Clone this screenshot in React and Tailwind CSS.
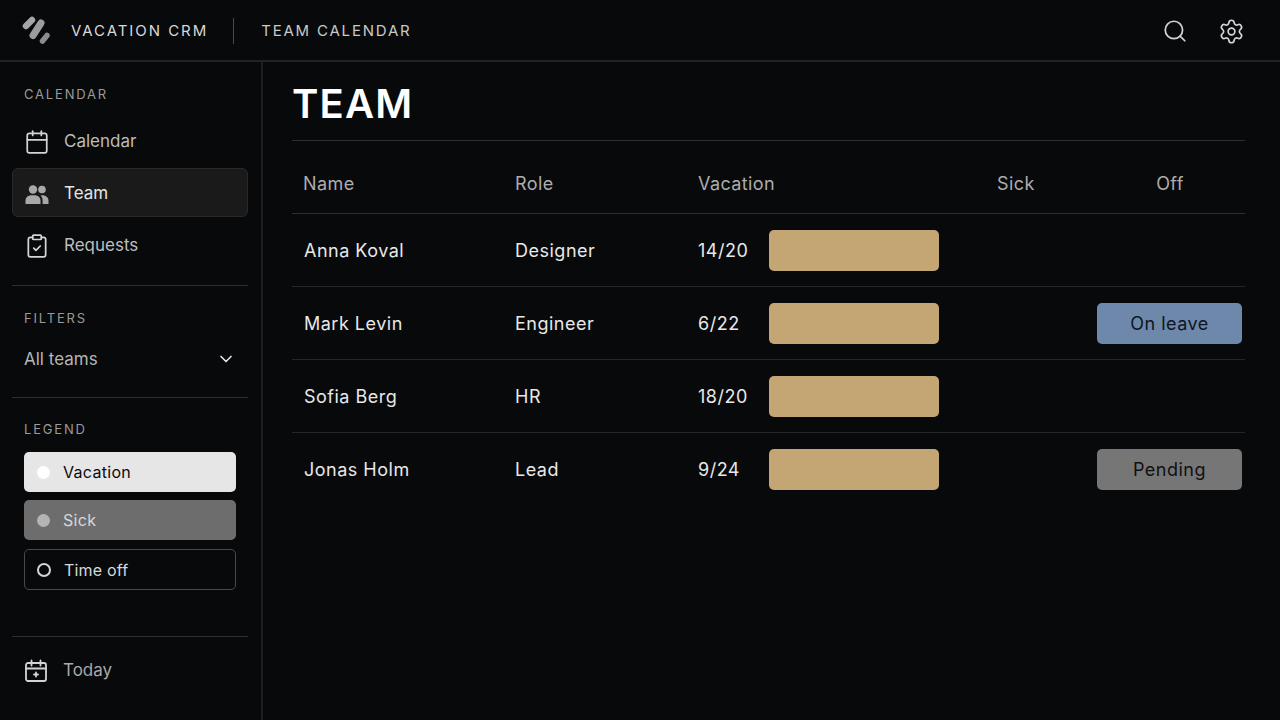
import { Calendar, ClipboardCheck, ChevronDown, Search, Settings } from 'lucide-react'

const ROWS = [
  { name: 'Anna Koval', role: 'Designer', days: '14/20' },
  { name: 'Mark Levin', role: 'Engineer', days: '6/22', off: 'On leave' },
  { name: 'Sofia Berg', role: 'HR', days: '18/20' },
  { name: 'Jonas Holm', role: 'Lead', days: '9/24', off: 'Pending' },
]

const COLS = 'grid grid-cols-[223px_183px_299px_100px_148px]'

function Logo() {
  return (
    <svg width="32" height="32" viewBox="0 0 32 32" fill="none" strokeLinecap="round">
      <path d="M12 5 6 11" stroke="#a6a6a6" strokeWidth="6.5" />
      <path d="M21 8 13 20.5" stroke="#9c9c9c" strokeWidth="7" />
      <path d="M27 20.5 22.5 26" stroke="#8c8c8c" strokeWidth="5.5" />
    </svg>
  )
}

function TeamIcon() {
  return (
    <svg width="26" height="26" viewBox="0 0 26 26" fill="#a8a8a8">
      <circle cx="9" cy="8.5" r="4.2" />
      <circle cx="18" cy="8.5" r="3.8" />
      <path d="M1.5 23v-3.5c0-3.2 2.6-5.3 6-5.3h3c3.4 0 6 2.1 6 5.3V23z" />
      <path d="M18.6 23v-3.8c0-1.8-.7-3.6-2-4.8.5-.1 1-.2 1.6-.2 3.4 0 6.3 2.1 6.3 5.3V23z" />
    </svg>
  )
}

function TodayIcon() {
  return (
    <svg width="26" height="26" viewBox="0 0 26 26" fill="none" stroke="#d4d4d4" strokeWidth="1.8" strokeLinecap="round" strokeLinejoin="round">
      <rect x="2" y="5" width="20" height="18" rx="2" />
      <path d="M2 10.5h20M7.5 2.5v5M16.5 2.5v5" />
      <path d="M12 14.5v4M10 16.5h4" />
    </svg>
  )
}

function NavItem({ icon, label, active }) {
  return (
    <div className={active
      ? 'h-[49px] -mt-px mb-px pt-[2px] -mx-3 pl-[11px] pr-3 flex items-center gap-[14px] rounded-md bg-[#1a1a1b] border border-[#29292a] text-[#e5e5e5]'
      : 'h-[49px] -mx-3 pl-[11px] pr-3 flex items-center gap-[14px] border border-transparent text-[#bdbdbd]'}>
      <span className="w-[26px] flex justify-center">{icon}</span>
      <span className="text-[17px]">{label}</span>
    </div>
  )
}

function SectionLabel({ children }) {
  return <div className="text-[13px] leading-4 tracking-[0.14em] text-[#9a9a9a]">{children}</div>
}

function Divider() {
  return <div className="h-px bg-[#2e2e2f] -mx-3" />
}

export default function App() {
  return (
    <div className="w-[1280px] h-[720px] overflow-hidden bg-[#08090b] text-white flex flex-col font-['Inter',sans-serif]">
      {/* top bar */}
      <header className="h-[62px] shrink-0 border-b-2 border-[#232324] flex items-center pt-[2px] pl-5 pr-[35px]">
        <Logo />
        <span className="ml-[19px] text-[15px] tracking-[0.13em] text-[#d8d8d8]">VACATION CRM</span>
        <span className="ml-[25px] w-px h-[26px] bg-[#4a4a4a]" />
        <span className="ml-[27px] text-[15px] tracking-[0.12em] text-[#c9c9c9]">TEAM CALENDAR</span>
        <Search size={26} strokeWidth={1.6} className="ml-auto text-[#d4d4d4]" />
        <Settings size={27} strokeWidth={1.5} className="ml-[30px] text-[#d4d4d4]" />
      </header>

      <div className="flex-1 flex min-h-0">
        {/* sidebar */}
        <aside className="w-[263px] shrink-0 border-r-2 border-[#1f1f20] pl-6 pr-[25px] flex flex-col">
          <div className="pt-6">
            <SectionLabel>CALENDAR</SectionLabel>
          </div>
          <div className="mt-[15px] flex flex-col gap-[3px]">
            <NavItem icon={<Calendar size={26} strokeWidth={1.6} className="text-[#d4d4d4]" />} label="Calendar" />
            <NavItem active icon={<TeamIcon />} label="Team" />
            <NavItem icon={<ClipboardCheck size={26} strokeWidth={1.6} className="text-[#d4d4d4]" />} label="Requests" />
          </div>
          <div className="mt-[15px]"><Divider /></div>
          <div className="mt-[24px]"><SectionLabel>FILTERS</SectionLabel></div>
          <div className="mt-[21px] flex items-center justify-between text-[#b5b5b5]">
            <span className="text-[17px] leading-6">All teams</span>
            <ChevronDown size={20} strokeWidth={2} className="text-[#e5e5e5]" />
          </div>
          <div className="mt-[26px]"><Divider /></div>
          <div className="mt-[23px]"><SectionLabel>LEGEND</SectionLabel></div>
          <div className="mt-[15px] flex flex-col">
            <div className="h-10 rounded-[5px] bg-[#e6e6e6] flex items-center pl-[13px] text-[#0b0b0d]">
              <span className="w-[13px] h-[13px] rounded-full bg-white" />
              <span className="ml-[13px] text-[16px] tracking-[0.3px]">Vacation</span>
            </div>
            <div className="mt-2 h-10 rounded-[5px] bg-[#6d6d6e] flex items-center pl-[13px] text-[#d8d8d8]">
              <span className="w-[13px] h-[13px] rounded-full bg-[#b4b4b4]" />
              <span className="ml-[13px] text-[16px] tracking-[0.3px]">Sick</span>
            </div>
            <div className="mt-[9px] h-[41px] rounded-[5px] border border-[#49494a] flex items-center pl-3 text-[#d8d8d8]">
              <span className="w-[14px] h-[14px] rounded-full border-2 border-[#d4d4d4]" />
              <span className="ml-[13px] text-[16px] tracking-[0.2px]">Time off</span>
            </div>
          </div>
          <div className="mt-[46px]"><Divider /></div>
          <div className="mt-[21px] flex items-center gap-[13px] text-[#a8a8a8]">
            <TodayIcon />
            <span className="text-[17px]">Today</span>
          </div>
        </aside>

        {/* main */}
        <main className="flex-1 pl-[29px] pr-[35px]">
          <h1 className="h-[79px] pt-[17px] text-[40px] leading-[50px] font-semibold tracking-[0.03em] text-white border-b border-[#2e2e2f]">TEAM</h1>
          <div className={`${COLS} h-[73px] pt-3 items-center border-b border-[#2e2e2f] text-[18px] tracking-[0.4px] text-[#adadad]`}>
            <span className="pl-[11px]">Name</span>
            <span>Role</span>
            <span>Vacation</span>
            <span>Sick</span>
            <span className="text-center pl-[1px] pr-[3px]">Off</span>
          </div>
          {ROWS.map((r, i) => (
            <div key={r.name} className={`${COLS} h-[73px] items-center text-[18px] tracking-[0.5px] text-[#e8e8e8] ${i < ROWS.length - 1 ? 'border-b border-[#262627]' : ''}`}>
              <span className="pl-3">{r.name}</span>
              <span>{r.role}</span>
              <div className="flex items-center">
                <span className="w-[71px]">{r.days}</span>
                <div className="w-[170px] h-[41px] rounded-[5px] bg-[#c4a574]" />
              </div>
              <span />
              {r.off ? (
                <div className={r.off === 'On leave'
                  ? 'w-[145px] h-[41px] rounded-[5px] bg-[#6d88ab] text-[#0d1622] flex items-center justify-center'
                  : 'w-[145px] h-[41px] rounded-[5px] bg-[#767676] text-[#101012] flex items-center justify-center'}>
                  {r.off}
                </div>
              ) : <span />}
            </div>
          ))}
        </main>
      </div>
    </div>
  )
}
